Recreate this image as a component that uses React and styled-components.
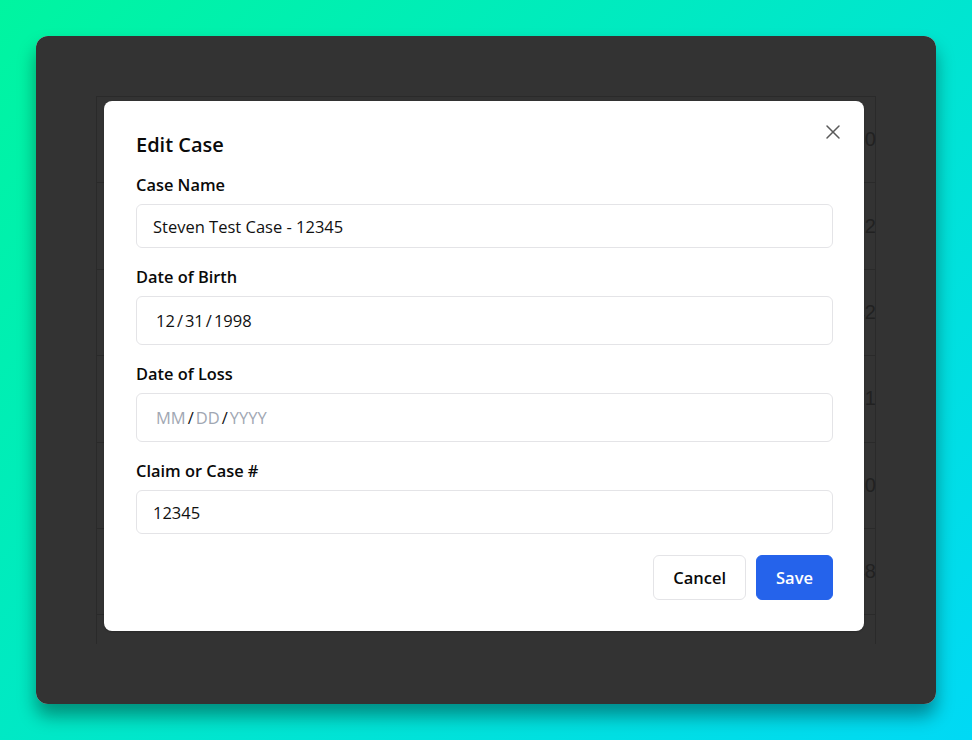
import React from "react";
import styled, { createGlobalStyle } from "styled-components";
import { X } from "lucide-react";

const GlobalStyle = createGlobalStyle`
  html, body { margin: 0; padding: 0; }
  body {
    background: linear-gradient(135deg, #00f5a0 0%, #00d9f5 100%);
    font-family: "Open Sans", "Noto Sans", sans-serif;
    min-height: 740px;
  }
  * { box-sizing: border-box; }
`;

const Stage = styled.div`
  height: 740px;
  padding: 36px;
`;

const Window = styled.div`
  position: relative;
  width: 900px;
  height: 668px;
  border-radius: 12px;
  overflow: hidden;
  background: #ffffff;
  box-shadow: 0 12px 18px rgba(0, 0, 0, 0.38);
`;

const PageBody = styled.div`
  padding: 60px;
  height: 100%;
`;

const TableBox = styled.div`
  border: 1px solid #d2d2d2;
  border-bottom: none;
  border-right: none;
  height: 548px;
  overflow: hidden;
`;

const Row = styled.div`
  height: 86.4px;
  border-bottom: 1px solid #d2d2d2;
  display: flex;
  align-items: center;
  justify-content: flex-end;
  font-family: "Liberation Sans", sans-serif;
  font-size: 20px;
  color: #a6a6a6;
  box-shadow: inset -1px 0 0 #d2d2d2;
`;

const Overlay = styled.div`
  position: absolute;
  inset: 0;
  background: rgba(0, 0, 0, 0.8);
  padding: 65px 0 0 68px;
`;

const Modal = styled.div`
  position: relative;
  width: 760px;
  background: #ffffff;
  border-radius: 8px;
  padding: 32px 31px 31px 32px;
  box-shadow: 0 1px 2px rgba(0, 0, 0, 0.2);
`;

const CloseButton = styled.button`
  position: absolute;
  top: 19px;
  right: 19px;
  width: 24px;
  height: 24px;
  padding: 0;
  border: none;
  background: transparent;
  color: #5a5a5a;
  display: flex;
  align-items: center;
  justify-content: center;
  cursor: pointer;
`;

const Title = styled.h2`
  margin: 0 0 18px;
  font-size: 20px;
  line-height: 24px;
  font-weight: 600;
  color: #0a0a0a;
`;

const Form = styled.div`
  display: flex;
  flex-direction: column;
  gap: 19px;
`;

const Field = styled.div`
  display: flex;
  flex-direction: column;
  gap: 9px;
`;

const Label = styled.label`
  font-size: 16.4px;
  line-height: 20px;
  font-weight: 600;
  color: #0a0a0a;
`;

const TextInput = styled.input`
  height: 44px;
  width: 100%;
  border: 1px solid #e4e4e7;
  border-radius: 6px;
  padding: 0 16px;
  font-family: inherit;
  font-size: 16.5px;
  color: #111111;
  background: #ffffff;
  outline: none;
`;

const DateBox = styled.div`
  height: 49px;
  border: 1px solid #e4e4e7;
  border-radius: 6px;
  padding: 0 19px;
  display: flex;
  align-items: center;
  font-size: 16.5px;
  color: #111111;
`;

const Segment = styled.span`
  color: ${(p) => (p.$empty ? "#a1a7b3" : "#111111")};
`;

const Slash = styled.span`
  color: #111111;
  padding: 0 2px;
`;

const Actions = styled.div`
  display: flex;
  justify-content: flex-end;
  gap: 10px;
  margin-top: 21px;
`;

const Button = styled.button`
  height: 45px;
  padding: 0 19px;
  border-radius: 6px;
  font-family: inherit;
  font-size: 16.5px;
  font-weight: 600;
  cursor: pointer;
  border: 1px solid ${(p) => (p.$primary ? "#2563eb" : "#e4e4e7")};
  background: ${(p) => (p.$primary ? "#2563eb" : "#ffffff")};
  color: ${(p) => (p.$primary ? "#ffffff" : "#0a0a0a")};
`;

function DateField({ parts, empty }) {
  return (
    <DateBox>
      <Segment $empty={empty}>{parts[0]}</Segment>
      <Slash>/</Slash>
      <Segment $empty={empty}>{parts[1]}</Segment>
      <Slash>/</Slash>
      <Segment $empty={empty}>{parts[2]}</Segment>
    </DateBox>
  );
}

const rows = ["30", "02", "42", "21", "10", "48", ""];

export default function App() {
  return (
    <>
      <GlobalStyle />
      <Stage>
        <Window>
          <PageBody>
            <TableBox>
              {rows.map((r, i) => (
                <Row key={i}>{r}</Row>
              ))}
            </TableBox>
          </PageBody>
          <Overlay>
            <Modal>
              <CloseButton aria-label="Close">
                <X size={24} strokeWidth={1.5} />
              </CloseButton>
              <Title>Edit Case</Title>
              <Form>
                <Field>
                  <Label>Case Name</Label>
                  <TextInput defaultValue="Steven Test Case - 12345" />
                </Field>
                <Field>
                  <Label>Date of Birth</Label>
                  <DateField parts={["12", "31", "1998"]} />
                </Field>
                <Field>
                  <Label>Date of Loss</Label>
                  <DateField parts={["MM", "DD", "YYYY"]} empty />
                </Field>
                <Field>
                  <Label>Claim or Case #</Label>
                  <TextInput defaultValue="12345" />
                </Field>
              </Form>
              <Actions>
                <Button>Cancel</Button>
                <Button $primary>Save</Button>
              </Actions>
            </Modal>
          </Overlay>
        </Window>
      </Stage>
    </>
  );
}
